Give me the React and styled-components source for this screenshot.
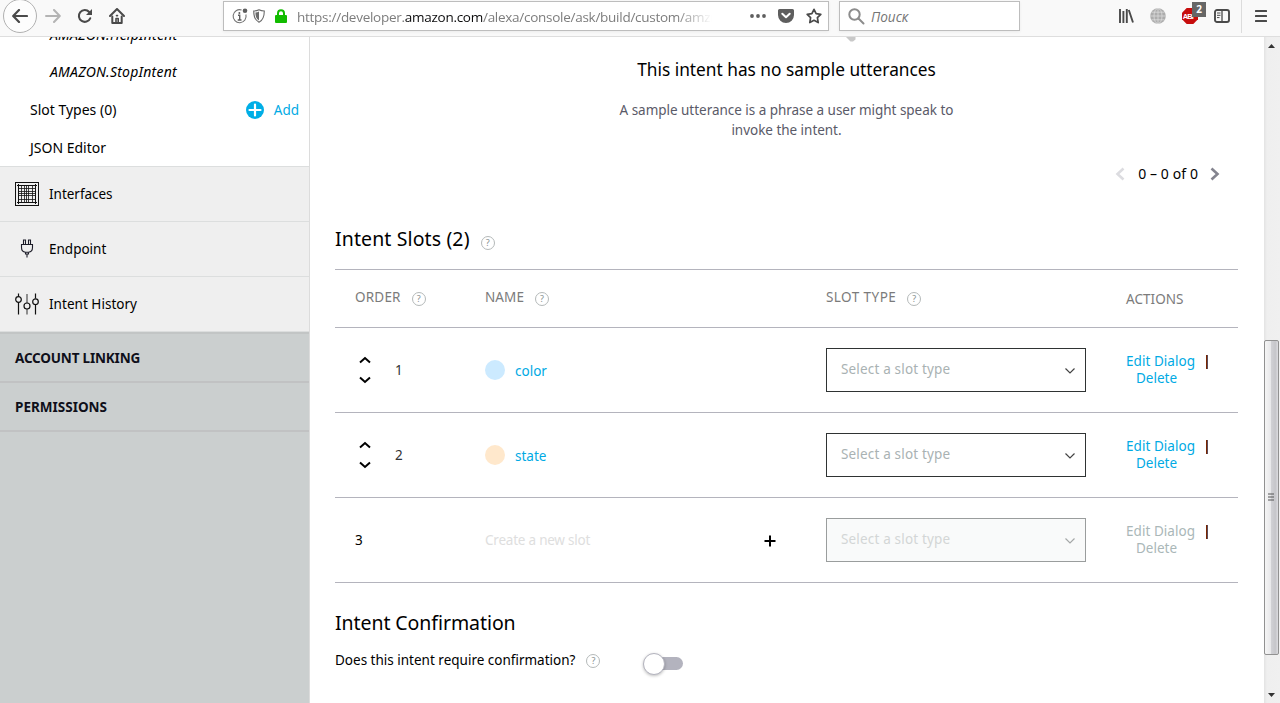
import React from "react";
import styled, { createGlobalStyle } from "styled-components";

const Global = createGlobalStyle`
  * { box-sizing: border-box; }
  html, body { margin: 0; height: 100%; overflow: hidden; background: #fff; }
  body { font-family: "Noto Sans", "Open Sans", sans-serif; font-size: 13.5px; color: #000; }
  svg { display: block; flex: none; }
`;

const Browser = styled.div`
  display: flex;
  flex-direction: column;
  width: 1280px;
  height: 703px;
  overflow: hidden;
`;

/* ---------- browser toolbar ---------- */

const Toolbar = styled.header`
  display: flex;
  align-items: flex-start;
  height: 37px;
  flex: none;
  background: #f9f9f9;
  border-bottom: 1px solid #dedede;
`;

const NavButtons = styled.div`
  display: flex;
  align-items: center;
  height: 32px;
  width: 223px;
  padding-left: 3px;
`;

const BackButton = styled.div`
  display: flex;
  align-items: center;
  justify-content: center;
  width: 34px;
  height: 34px;
  flex: none;
  border: 1px solid #b1b1b1;
  border-radius: 50%;
  background: #fdfdfd;
  margin-right: 8px;
`;

const NavIcon = styled.div`
  width: 16px;
  margin-right: 16px;
`;

const Field = styled.div`
  display: flex;
  align-items: center;
  height: 30px;
  margin-top: 1px;
  width: ${(p) => p.$width}px;
  margin-right: ${(p) => p.$gap || 0}px;
  padding: 0 6px 0 ${(p) => p.$pad}px;
  background: #fff;
  border: 1px solid #bdbdbd;
  box-shadow: 0 1px 3px rgba(0, 0, 0, 0.06);
  font-family: "Open Sans", "Noto Sans", sans-serif;
`;

const FieldIcons = styled.div`
  display: flex;
  align-items: center;
  gap: ${(p) => p.$gap}px;
`;

const Url = styled.div`
  flex: 1;
  margin-left: 10px;
  padding-top: 2px;
  overflow: hidden;
  white-space: nowrap;
  font-size: 13.5px;
  letter-spacing: -0.27px;
  line-height: 24px;
  color: #7d7d7d;
  margin-right: 38px;
  mask-image: linear-gradient(to right, #000 calc(100% - 36px), transparent);
  b { font-weight: 400; color: #0c0c0d; }
`;

const SearchHint = styled.div`
  margin-left: 6px;
  padding-top: 1px;
  font-size: 13.6px;
  font-style: italic;
  color: #757575;
`;

const ToolIcons = styled.div`
  display: flex;
  align-items: center;
  height: 32px;
  margin-left: auto;
  padding-right: 13px;
`;

const ToolIcon = styled.div`
  position: relative;
  width: 16px;
  margin-right: 16px;
`;

const Badge = styled.span`
  position: absolute;
  left: 10px;
  top: -6px;
  width: 14px;
  height: 15px;
  background: #666;
  color: #fff;
  font: 700 10px/15px "Open Sans", sans-serif;
  text-align: center;
`;

const MenuIcon = styled.div`
  display: flex;
  align-items: center;
  height: 33px;
  padding-left: 13px;
  margin-left: -5px;
  border-left: 1px solid #dcdcdc;
`;

/* ---------- page ---------- */

const Page = styled.div`
  display: flex;
  flex: 1;
  min-height: 0;
`;

const Sidebar = styled.nav`
  width: 310px;
  flex: none;
  overflow: hidden;
  display: flex;
  flex-direction: column;
  background: #cbcfcf;
  border-right: 1px solid #dcdcdc;
`;

const ModelList = styled.div`
  margin-top: -22px;
  flex: none;
  height: 152px;
  background: #fff;
  border-bottom: 1px solid #dcdede;
`;

const ModelItem = styled.div`
  display: flex;
  align-items: center;
  justify-content: space-between;
  height: 38px;
  padding: 0 10px ${(p) => (p.$low ? 0 : 2)}px ${(p) => (p.$nested ? 50 : 30)}px;
  font-size: 14px;
  font-style: ${(p) => (p.$nested ? "italic" : "normal")};
  letter-spacing: ${(p) => (p.$nested ? 0.22 : 0)}px;
`;

const AddLink = styled.span`
  display: flex;
  align-items: center;
  gap: 10px;
  padding-top: 2px;
  color: #00aae4;
  font-size: 13.5px;
`;

const SectionItem = styled.div`
  display: flex;
  align-items: center;
  gap: 10px;
  height: 55px;
  flex: none;
  padding-left: 15px;
  background: #efefef;
  border-bottom: 1px solid #dcdede;
  letter-spacing: ${(p) => p.$track || 0}px;
`;

const GroupList = styled.div`
  border-top: 2px solid #c2c5c5;
`;

const GroupItem = styled.div`
  height: 49px;
  padding-left: 15px;
  border-bottom: 2px solid #c1c2c3;
  font-weight: 700;
  line-height: 48px;
  color: #0f0f1a;
  letter-spacing: ${(p) => p.$track || 0}px;
`;

const Main = styled.main`
  flex: 1;
  overflow: hidden;
  padding: 0 26px 0 25px;
`;

const Remnant = styled.div`
  height: 21px;
  padding-left: 511px;
`;

const EmptyTitle = styled.h3`
  margin: 0;
  font-size: 17.3px;
  font-weight: 400;
  line-height: 24px;
  text-align: center;
`;

const EmptyText = styled.p`
  width: 350px;
  margin: 18px auto 24px;
  line-height: 20px;
  text-align: center;
  letter-spacing: -0.03px;
  color: #5a5a68;
`;

const Pager = styled.div`
  display: flex;
  align-items: center;
  justify-content: flex-end;
  gap: 12px;
  height: 20px;
  padding-right: 18px;
  font-size: 14px;
  letter-spacing: 0.1px;
`;

const PagerText = styled.span`
  padding: 0 0 2px 1px;
`;

const Heading = styled.h2`
  display: flex;
  align-items: center;
  gap: 11px;
  margin: ${(p) => p.$top}px 0 0;
  height: 28px;
  font-size: 19.5px;
  font-weight: 400;
  letter-spacing: ${(p) => p.$track || 0}px;
`;

const Help = styled.span`
  display: inline-flex;
  align-items: center;
  justify-content: center;
  width: 14px;
  height: 14px;
  margin-top: ${(p) => p.$drop || 0}px;
  border: 1px solid #b4b9b9;
  border-radius: 50%;
  color: #879090;
  font-size: 9px;
  line-height: 12px;
  letter-spacing: 0;
`;

const Table = styled.div`
  margin-top: 17px;
  border-top: 1px solid #b4b4bd;
`;

const Row = styled.div`
  display: grid;
  grid-template-columns: 130px 341px 300px 1fr;
  align-items: center;
  height: ${(p) => (p.$head ? 58 : 85)}px;
  padding-left: 20px;
  border-bottom: 1px solid #b4b4bd;
`;

const HeadCell = styled.div`
  display: flex;
  align-items: center;
  gap: 11px;
  padding-bottom: ${(p) => (p.$low ? 0 : 3)}px;
  color: #7b7b7b;
  letter-spacing: ${(p) => p.$track || 0}px;
`;

const OrderCell = styled.div`
  display: flex;
  align-items: center;
  gap: 24px;
  color: ${(p) => (p.$isNew ? "#000" : "#333")};
`;

const Arrows = styled.div`
  display: flex;
  flex-direction: column;
  gap: 12px;
  padding-left: 4px;
`;

const NameCell = styled.div`
  display: flex;
  align-items: center;
  gap: 10px;
  color: #00aae4;
`;

const Dot = styled.span`
  width: 20px;
  height: 20px;
  border-radius: 50%;
  background: ${(p) => p.$color};
`;

const SlotName = styled.span`
  padding-top: 2px;
`;

const NewSlot = styled.div`
  display: flex;
  align-items: center;
  justify-content: space-between;
  padding-right: 50px;
  color: #dedede;
  letter-spacing: -0.22px;
  svg { margin-top: 2px; }
`;

const Select = styled.div`
  display: flex;
  align-items: center;
  justify-content: space-between;
  width: 260px;
  height: 44px;
  padding: 0 10px 2px 14px;
  border: 1px solid ${(p) => (p.$disabled ? "#9a9d9d" : "#2f3333")};
  background: ${(p) => (p.$disabled ? "#f9fafa" : "#fff")};
  color: ${(p) => (p.$disabled ? "#d3d6d6" : "#a9b2b3")};
  letter-spacing: 0.17px;
  svg { margin-top: 3px; }
`;

const Actions = styled.div`
  line-height: 17px;
  color: ${(p) => (p.$disabled ? "#aab7b8" : "#00aae4")};
  div + div { padding-left: 10px; }
`;

const EditLine = styled.div`
  display: flex;
  justify-content: space-between;
  width: 82px;
  letter-spacing: 0.05px;
`;

const Divider = styled.span`
  width: 2px;
  height: 14px;
  margin-top: 2px;
  background: linear-gradient(to right, #7a2600 50%, #5d4a58 50%);
`;

const Question = styled.div`
  display: flex;
  align-items: center;
  height: 30px;
  margin-top: 9px;
  gap: 11px;
`;

const Track = styled.span`
  position: relative;
  width: 36px;
  height: 13px;
  margin: 6px 0 0 36px;
  border-radius: 7px;
  background: #b3b3be;
`;

const Knob = styled.span`
  position: absolute;
  left: -4px;
  top: -4px;
  width: 22px;
  height: 22px;
  border: 1px solid #b3b3be;
  border-radius: 50%;
  background: #fff;
  box-shadow: 0 1px 3px rgba(0, 0, 0, 0.25);
`;

const Scrollbar = styled.div`
  display: flex;
  flex-direction: column;
  align-items: center;
  width: 16px;
  flex: none;
  background: linear-gradient(to right, #e3e3e3, #efefef 3px, #f0f0f0);
  padding: 7px 1px 6px 0;
`;

const Thumb = styled.div`
  display: flex;
  align-items: center;
  justify-content: center;
  width: 15px;
  height: 315px;
  margin: 292px 0 auto;
  padding: 0 1px 2px 0;
  border: 1px solid #919191;
  border-radius: 2px;
  background: linear-gradient(to right, #f5f5f5, #e8e8ea 45%, #d0d0d4 50%, #c6c6ca 80%, #dcdce0);
`;

/* ---------- icons ---------- */

const Line = ({ w, h, d, color = "#4a4a4a", sw = 2, cap = "round" }) => (
  <svg width={w} height={h} viewBox={`0 0 ${w} ${h}`} fill="none" stroke={color} strokeWidth={sw} strokeLinecap={cap} strokeLinejoin={cap === "round" ? "round" : "miter"}>
    <path d={d} />
  </svg>
);

const Reload = () => (
  <svg width="16" height="16" viewBox="0 0 16 16">
    <path d="M13.2 10.3A5.9 5.9 0 1 1 12.2 4" fill="none" stroke="#4a4a4a" strokeWidth="2.1" strokeLinecap="round" />
    <path d="M15 1v6H9z" fill="#4a4a4a" />
  </svg>
);

const Home = () => (
  <svg width="16" height="16" viewBox="0 0 16 16" fill="none" stroke="#4a4a4a" strokeWidth="2" strokeLinecap="round" strokeLinejoin="round">
    <path d="M1 8l7-7 7 7" />
    <path d="M3.3 8.5V15h9.4V8.5" />
    <path d="M7 15v-4.5h2.2V15M7.5 7.6h1" strokeWidth="1.6" />
  </svg>
);

const Info = () => (
  <svg width="16" height="16" viewBox="0 0 16 16" fill="none">
    <path d="M9.6 2A6.5 6.5 0 1 0 13.9 6.5" stroke="#737373" strokeWidth="1.1" />
    <path d="M6 7.2h1.7V12M5.7 12h3.8" stroke="#5e5e5e" strokeWidth="1.4" />
    <circle cx="7.4" cy="4.9" r="1" fill="#5e5e5e" />
    <circle cx="13" cy="2.7" r="2.3" fill="#5e5e5e" />
  </svg>
);

const Shield = () => (
  <svg width="12" height="14" viewBox="0 0 12 14">
    <path d="M6 .8C4.6 1.6 2.8 2 .7 2c0 5 .7 9 5.3 11.3C10.6 11 11.3 7 11.3 2 9.2 2 7.4 1.6 6 .8z" fill="#fff" stroke="#6b6b6b" strokeWidth="1.1" />
    <path d="M6 2.6c-1 .6-2.2.9-3.6 1 .1 3.7.7 6.4 3.6 8z" fill="#6b6b6b" />
  </svg>
);

const Lock = () => (
  <svg width="12" height="14" viewBox="0 0 12 14">
    <path d="M3 7V4.2a3 3 0 0 1 6 0V7" fill="none" stroke="#12bc00" strokeWidth="2" />
    <rect y="6" width="12" height="8" rx="1" fill="#12bc00" />
  </svg>
);

const Dots = () => (
  <svg width="16" height="4" viewBox="0 0 16 4" fill="#5e5e5e">
    <circle cx="2" cy="2" r="1.9" />
    <circle cx="8" cy="2" r="1.9" />
    <circle cx="14" cy="2" r="1.9" />
  </svg>
);

const Pocket = () => (
  <svg width="16" height="14" viewBox="0 0 16 14">
    <path d="M1.5 0h13A1.5 1.5 0 0 1 16 1.5V6A8 8 0 0 1 0 6V1.5A1.5 1.5 0 0 1 1.5 0z" fill="#5e5e5e" />
    <path d="M4.3 4.8L8 8.3l3.7-3.5" fill="none" stroke="#fff" strokeWidth="2" strokeLinecap="round" strokeLinejoin="round" />
  </svg>
);

const Star = () => (
  <svg width="16" height="16" viewBox="0 0 16 16">
    <path d="M8 1.3l2.1 4.4 4.7.6-3.4 3.4.8 4.9L8 12.3l-4.2 2.3.8-4.9L1.2 6.3l4.7-.6z" fill="none" stroke="#4a4a4a" strokeWidth="1.7" strokeLinejoin="round" />
  </svg>
);

const Search = () => (
  <svg width="17" height="17" viewBox="0 0 17 17" fill="none" stroke="#8c8c8c" strokeWidth="2" strokeLinecap="round">
    <circle cx="6.5" cy="6.5" r="5.2" />
    <path d="M10.5 10.5l5 5" />
  </svg>
);

const Library = () => (
  <svg width="16" height="14" viewBox="0 0 16 14" stroke="#4a4a4a" strokeWidth="1.9" fill="none">
    <path d="M2 0v14M5.4 2v12M8.8 0v14M10.8 1l4.2 12.5" />
  </svg>
);

const Globe = () => (
  <svg width="16" height="16" viewBox="0 0 16 16" fill="none" stroke="#dadada" strokeWidth=".8">
    <circle cx="8" cy="8" r="7.8" fill="#adadad" stroke="none" />
    <path d="M8 0v16M0 8h16M1.5 4.2h13M1.5 11.8h13" />
    <ellipse cx="8" cy="8" rx="4" ry="7.6" />
  </svg>
);

const StopSign = () => (
  <svg width="16" height="16" viewBox="0 0 16 16">
    <path d="M4.7 0h6.6L16 4.7v6.6L11.3 16H4.7L0 11.3V4.7z" fill="#c70d0d" />
    <text x="7.7" y="10.8" fill="#fff" fontFamily="Liberation Sans, sans-serif" fontWeight="700" fontSize="7.5" textAnchor="middle" textLength="14">ABP</text>
  </svg>
);

const SidebarIcon = () => (
  <svg width="16" height="14" viewBox="0 0 16 14" fill="none" stroke="#4a4a4a">
    <rect x="1" y="1" width="14" height="12" rx="2" strokeWidth="1.9" />
    <path d="M8 1v12" strokeWidth="1.3" />
    <path d="M3 4h3.5M3 6.3h3.5M3 8.6h2.5" strokeWidth="1" />
  </svg>
);

const Burger = () => (
  <svg width="12" height="12" viewBox="0 0 12 12" fill="#4a4a4a">
    <rect width="12" height="2" rx=".5" />
    <rect y="5" width="12" height="2" rx=".5" />
    <rect y="10" width="12" height="2" rx=".5" />
  </svg>
);

const PlusCircle = () => (
  <svg width="18" height="18" viewBox="0 0 18 18">
    <circle cx="9" cy="9" r="9" fill="#00aee6" />
    <path d="M9 3.5v11M3.5 9h11" stroke="#fff" strokeWidth="2.2" strokeLinecap="round" />
  </svg>
);

const Mesh = () => (
  <svg width="24" height="24" viewBox="0 0 24 24" fill="none" stroke="#111">
    <rect x=".5" y=".5" width="23" height="23" />
    <path d="M2 3.5h20M2 20.5h20M3.5 2v20M20.5 2v20" />
    <path d="M3 6.5h18M3 9.5h18M3 11.5h18M3 13.5h18M3 17.5h18M6.5 3v18M9.5 3v18M11.5 3v18M13.5 3v18M17.5 3v18" strokeWidth=".8" />
  </svg>
);

const Plug = () => (
  <svg width="24" height="24" viewBox="0 0 24 24" fill="none" stroke="#1c1c28" strokeWidth="1.1">
    <path d="M8.5 7.5V3h2v4.5M13.5 7.5V3h2v4.5" />
    <path d="M6.5 7.5h11v3c0 3-2 4.5-4 4.7h-3c-2-.2-4-1.700-4-4.700z" />
    <path d="M10.5 15.2V17h3v-1.800M12 17v3.500" />
  </svg>
);

const Sliders = () => (
  <svg width="24" height="24" viewBox="0 0 24 24" fill="none" stroke="#111" strokeWidth="1.2">
    <path d="M3.5 1.5v3M3.5 10v12.500M20.5 1.500v5M20.5 12.500v10" />
    <path d="M12 2v9M12 17v5.500" stroke="#777" strokeWidth="1.6" />
    <circle cx="3.5" cy="7.5" r="2.8" />
    <circle cx="12" cy="14" r="3" />
    <circle cx="20.5" cy="9.7" r="2.8" />
  </svg>
);

const Triangle = ({ up }) => (
  <svg width="7" height="4" viewBox="0 0 7 4">
    <path d={up ? "M0 4L3.5 0 7 4z" : "M0 0h7L3.5 4z"} fill="#333" />
  </svg>
);

const slots = [
  { order: 1, name: "color", dot: "#cceaff" },
  { order: 2, name: "state", dot: "#ffe8cc" },
];

const SlotType = ({ disabled }) => (
  <Select $disabled={disabled}>
    Select a slot type
    <Line w={10} h={6} d="M.5 .5l4.5 4.5 4.5-4.5" sw={1.2} cap="butt" color={disabled ? "#a5a8a8" : "#444"} />
  </Select>
);

const RowActions = ({ disabled }) => (
  <Actions $disabled={disabled}>
    <EditLine>Edit Dialog<Divider /></EditLine>
    <div>Delete</div>
  </Actions>
);

export default function App() {
  return (
    <Browser>
      <Global />
      <Toolbar>
        <NavButtons>
          <BackButton><Line w={16} h={14} d="M15 7H1.5M7 1L1.2 7 7 13" sw={2.2} /></BackButton>
          <NavIcon><Line w={16} h={14} d="M1 7h13.5M9 1l5.8 6L9 13" color="#b4b4b4" /></NavIcon>
          <NavIcon><Reload /></NavIcon>
          <NavIcon><Home /></NavIcon>
        </NavButtons>
        <Field $width={606} $gap={10} $pad={8}>
          <FieldIcons $gap={5}><Info /><Shield /><span /><Lock /></FieldIcons>
          <Url>https://developer.<b>amazon.com</b>/alexa/console/ask/build/custom/amzn</Url>
          <FieldIcons $gap={12}><Dots /><Pocket /><Star /></FieldIcons>
        </Field>
        <Field $width={181} $pad={8}>
          <Search />
          <SearchHint>Поиск</SearchHint>
        </Field>
        <ToolIcons>
          <ToolIcon><Library /></ToolIcon>
          <ToolIcon><Globe /></ToolIcon>
          <ToolIcon><StopSign /><Badge>2</Badge></ToolIcon>
          <ToolIcon><SidebarIcon /></ToolIcon>
          <MenuIcon><Burger /></MenuIcon>
        </ToolIcons>
      </Toolbar>
      <Page>
        <Sidebar>
          <ModelList>
            <ModelItem $nested $low>AMAZON.HelpIntent</ModelItem>
            <ModelItem $nested>AMAZON.StopIntent</ModelItem>
            <ModelItem>Slot Types (0)<AddLink><PlusCircle />Add</AddLink></ModelItem>
            <ModelItem>JSON Editor</ModelItem>
          </ModelList>
          <SectionItem $track={-0.02}><Mesh />Interfaces</SectionItem>
          <SectionItem><Plug />Endpoint</SectionItem>
          <SectionItem $track={0.03}><Sliders />Intent History</SectionItem>
          <GroupList>
            <GroupItem $track={-0.18}>ACCOUNT LINKING</GroupItem>
            <GroupItem>PERMISSIONS</GroupItem>
          </GroupList>
        </Sidebar>
        <Main>
          <Remnant>
            <svg width="10" height="5" viewBox="0 0 10 5"><path d="M0 0h9.5v2.5L7 4.500H4.500z" fill="#c8c8c8" /></svg>
          </Remnant>
          <EmptyTitle>This intent has no sample utterances</EmptyTitle>
          <EmptyText>A sample utterance is a phrase a user might speak to invoke the intent.</EmptyText>
          <Pager>
            <Line w={10} h={14} d="M8.5 1.5L2.5 7l6 5.5" color="#dcdce0" sw={2.6} cap="butt" />
            <PagerText>0 – 0 of 0</PagerText>
            <Line w={10} h={14} d="M1.5 1.5L7.5 7l-6 5.5" color="#84848f" sw={2.6} cap="butt" />
          </Pager>
          <Heading $top={40} $track={0.12}>Intent Slots (2)<Help $drop={9}>?</Help></Heading>
          <Table>
            <Row $head>
              <HeadCell $track={0.2}>ORDER<Help $drop={3}>?</Help></HeadCell>
              <HeadCell $track={0.1}>NAME<Help $drop={3}>?</Help></HeadCell>
              <HeadCell $track={0.45}>SLOT TYPE<Help $drop={3}>?</Help></HeadCell>
              <HeadCell $low $track={0.05}>ACTIONS</HeadCell>
            </Row>
            {slots.map((s) => (
              <Row key={s.name}>
                <OrderCell>
                  <Arrows>
                    <Line w={12} h={8} d="M1 6.5l5-4.5 5 4.5" color="#000" cap="butt" />
                    <Line w={12} h={8} d="M1 1.5l5 4.5 5-4.5" color="#000" cap="butt" />
                  </Arrows>
                  {s.order}
                </OrderCell>
                <NameCell><Dot $color={s.dot} /><SlotName>{s.name}</SlotName></NameCell>
                <SlotType />
                <RowActions />
              </Row>
            ))}
            <Row>
              <OrderCell $isNew>3</OrderCell>
              <NewSlot>Create a new slot<Line w={12} h={12} d="M6 .5v11M.5 6h11" color="#000" cap="butt" /></NewSlot>
              <SlotType disabled />
              <RowActions disabled />
            </Row>
          </Table>
          <Heading $top={25} $track={-0.07}>Intent Confirmation</Heading>
          <Question>
            Does this intent require confirmation?
            <Help $drop={2}>?</Help>
            <Track><Knob /></Track>
          </Question>
        </Main>
        <Scrollbar>
          <Triangle up />
          <Thumb><Line w={6} h={8} d="M0 1h6M0 4h6M0 7h6" sw={1.2} color="#555" cap="butt" /></Thumb>
          <Triangle />
        </Scrollbar>
      </Page>
    </Browser>
  );
}
